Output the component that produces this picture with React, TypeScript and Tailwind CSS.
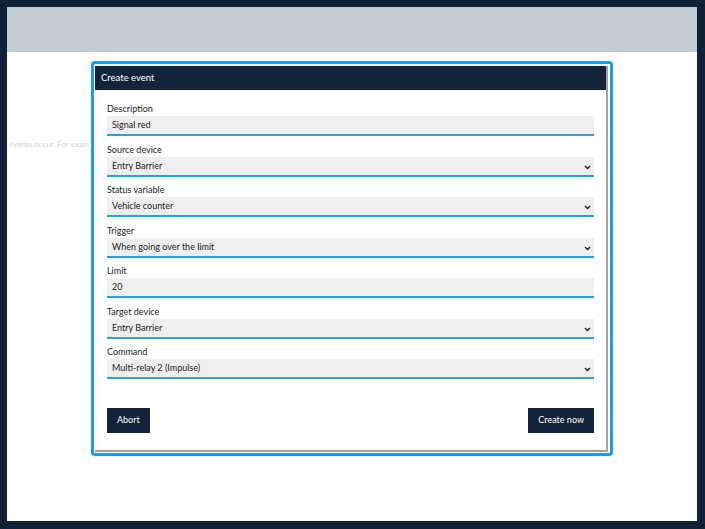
import React from 'react';

const fields: { label: string; value: string; select?: boolean }[] = [
  { label: 'Description', value: 'Signal red' },
  { label: 'Source device', value: 'Entry Barrier', select: true },
  { label: 'Status variable', value: 'Vehicle counter', select: true },
  { label: 'Trigger', value: 'When going over the limit', select: true },
  { label: 'Limit', value: '20' },
  { label: 'Target device', value: 'Entry Barrier', select: true },
  { label: 'Command', value: 'Multi-relay 2 (Impulse)', select: true },
];

function Chevron() {
  return (
    <svg width="7" height="5" viewBox="0 0 7 5" className="absolute right-[3px] top-[8px]">
      <path d="M1 1 L3.5 3.5 L6 1" fill="none" stroke="#222" strokeWidth="1.5" />
    </svg>
  );
}

export default function App() {
  return (
    <div
      className="w-[705px] h-[529px] bg-[#0f2236] pt-[7px] pl-[7px] pr-[8px] pb-[8px]"
      style={{ fontFamily: 'Lato, "Open Sans", sans-serif' }}
    >
      <div className="relative w-full h-full bg-white overflow-hidden">
        <div className="h-[45px] bg-[#c3cbd2]" />
        <p className="mt-[86px] pl-[2px] w-[82px] overflow-hidden text-[8px] text-[#d4d4d4] whitespace-nowrap">
          events occur. For example
        </p>

        {/* modal */}
        <div className="absolute left-[84px] top-[54px] w-[522px] h-[395px] border-[3px] border-[#1a9ee4] rounded-[4px] bg-white">
          <div className="h-[386px] mt-[2px] ml-[1px] mr-[2px] border-r-2 border-b-2 border-[#a3a3a3] flex flex-col">
            <div className="h-[24px] bg-[#13243a] flex items-center pl-[6px] text-[9.5px] text-white">
              Create event
            </div>
            <div className="pl-[12px] pr-[12px] pt-[12px] flex flex-col">
              {fields.map((f) => (
                <div key={f.label} className="h-[40.5px] flex flex-col">
                  <div className="h-[14px] text-[9px] leading-[14px] text-[#222]">{f.label}</div>
                  <div className="relative h-[20px] bg-[#efefef] border-b-2 border-[#2a9fd8] pl-[5px] text-[9px] leading-[18px] text-[#222]">
                    {f.value}
                    {f.select && <Chevron />}
                  </div>
                </div>
              ))}
              <div className="mt-[22px] flex justify-between">
                <button className="h-[25px] px-[10px] bg-[#13243a] text-white text-[9px]">Abort</button>
                <button className="h-[25px] px-[10px] bg-[#13243a] text-white text-[9px]">Create now</button>
              </div>
            </div>
          </div>
        </div>
      </div>
    </div>
  );
}
